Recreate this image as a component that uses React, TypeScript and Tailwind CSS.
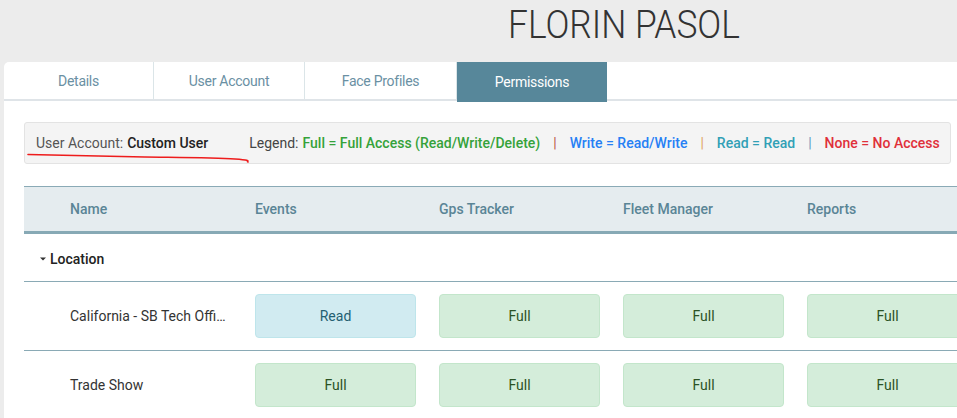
import React from 'react'

const TABS = [
  { label: 'Details', w: 'w-[150px]' },
  { label: 'User Account', w: 'w-[151px]' },
  { label: 'Face Profiles', w: 'w-[152px]' },
  { label: 'Permissions', w: 'w-[150px]', active: true },
]

const COLUMNS = ['Events', 'Gps Tracker', 'Fleet Manager', 'Reports']

const ROWS = [
  { name: 'California - SB Tech Office Building', perms: ['Read', 'Full', 'Full', 'Full'] },
  { name: 'Trade Show', perms: ['Full', 'Full', 'Full', 'Full'] },
]

function PermButton({ value }: { value: string }) {
  const isRead = value === 'Read'
  return (
    <div
      className={
        isRead
          ? 'w-[161px] h-[44px] flex items-center justify-center rounded-[4px] border border-[#bee5eb] bg-[#d1ebf1] text-[#245f72] text-[14px]'
          : 'w-[161px] h-[44px] flex items-center justify-center rounded-[4px] border border-[#c3e6cb] bg-[#d4edda] text-[#2b5224] text-[14px]'
      }
    >
      {value}
    </div>
  )
}

export default function App() {
  return (
    <div className="w-[957px] h-[418px] overflow-hidden bg-[#ececec] font-['Roboto',sans-serif]">
      {/* Title */}
      <div className="h-[62px] pl-[508px] pt-[1px]">
        <h1 className="text-[38px] font-light leading-[48px] text-[#333] origin-left scale-x-[0.93] whitespace-nowrap">
          FLORIN PASOL
        </h1>
      </div>

      {/* Panel */}
      <div className="ml-[4px] w-[1000px] bg-white rounded-tl-[5px] h-[356px]">
        {/* Tabs */}
        <div className="flex h-[39px] border-b-2 border-[#dfe4e8]">
          {TABS.map(t => (
            <div
              key={t.label}
              className={
                t.active
                  ? `${t.w} h-[40px] flex items-center justify-center bg-[#57879a] text-white text-[14px] tracking-[-0.02em]`
                  : `${t.w} h-full flex items-center justify-center pt-[2px] border-r border-[#dbe5e8] text-[#6a90a3] text-[14px] tracking-[-0.02em]`
              }
            >
              {t.label}
            </div>
          ))}
        </div>

        <div className="pl-[20px]">
          {/* Info / legend */}
          <div className="relative mt-[21px] w-[927px] h-[42px] flex items-center pl-[11px] rounded-[3px] border border-[#e3e3e3] bg-[#f4f4f4] text-[14px] whitespace-nowrap">
            <span className="text-[#555]">User Account: </span>
            <span className="ml-[4px] font-medium text-[#222]">Custom User</span>
            <span className="ml-[41px] text-[#444]">Legend: </span>
            <span className="ml-[4px] font-medium text-[#35a23a]">Full = Full Access (Read/Write/Delete)</span>
            <span className="mx-[13px] text-[#b85a45]">|</span>
            <span className="font-medium text-[#2680f5]">Write = Read/Write</span>
            <span className="mx-[13px] text-[#e0a35c]">|</span>
            <span className="font-medium text-[#31a0b6]">Read = Read</span>
            <span className="mx-[13px] text-[#5c9bc2]">|</span>
            <span className="font-medium text-[#e0303a]">None = No Access</span>
            <svg className="absolute left-0 top-0" width="240" height="42" viewBox="0 0 240 42" fill="none">
              <path
                d="M3 31.5 C 40 32.5, 80 33.5, 120 34 S 190 34.5, 210 36 S 220 38, 223 39"
                stroke="#ee1c1c"
                strokeWidth="1.6"
                strokeLinecap="round"
              />
            </svg>
          </div>

          {/* Table */}
          <div className="mt-[22px]">
            <div className="flex h-[48px] items-center bg-[#e5ecef] border-t border-[#8aaab6] border-b-[3px] border-b-[#87a9b5] text-[14px] font-medium text-[#5a8596]">
              <div className="w-[207px] pl-[46px]">Name</div>
              {COLUMNS.map(c => (
                <div key={c} className="w-[184px] pl-[24px]">{c}</div>
              ))}
            </div>

            <div className="flex h-[48px] items-center border-b border-[#8aaab5] pl-[16px] pt-[3px] text-[14px] font-medium text-[#222]">
              <svg width="6" height="4" viewBox="0 0 6 4" className="mr-[4px]">
                <path d="M0 0.5 L6 0.5 L3 3.5 Z" fill="#333" />
              </svg>
              Location
            </div>

            {ROWS.map(r => (
              <div key={r.name} className="flex h-[69px] items-center border-b border-[#8aaab5]">
                <div className="w-[207px] pl-[46px] pr-[4px] text-[14px] text-[#333] truncate">{r.name}</div>
                {r.perms.map((p, i) => (
                  <div key={i} className="w-[184px] pl-[24px]">
                    <PermButton value={p} />
                  </div>
                ))}
              </div>
            ))}
          </div>
        </div>
      </div>
    </div>
  )
}
